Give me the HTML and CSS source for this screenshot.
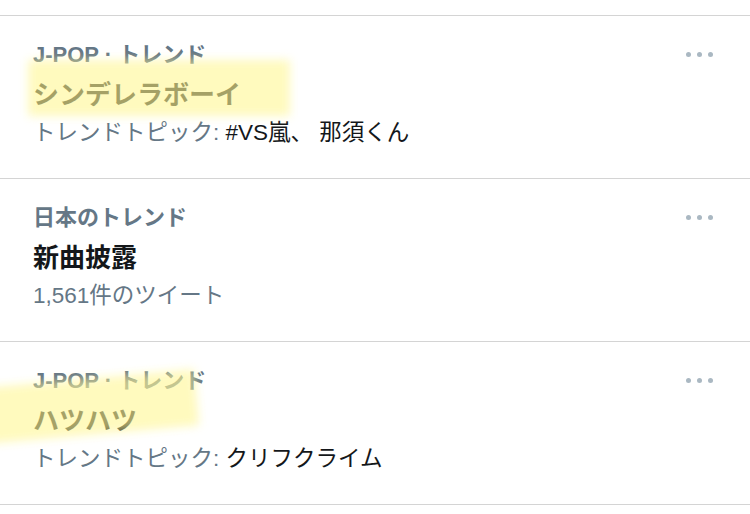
FILE: index.html
```html
<!DOCTYPE html>
<html lang="ja">
  <head>
    <meta charset="UTF-8" />
    <meta name="viewport" content="width=device-width, initial-scale=1.0" />
    <title>トレンド</title>
    <link rel="stylesheet" href="styles.css">
  </head>
  <body>
    <div class="trends">
      <div class="trend">
        <div class="trend-body">
          <div class="trend-category">J-POP · トレンド</div>
          <div class="trend-title">シンデレラボーイ</div>
          <div class="trend-meta">トレンドトピック: <span class="trend-topic">#VS嵐、 那須くん</span></div>
        </div>
        <div class="trend-more">
          <svg width="27" height="5" viewBox="0 0 27 5"><circle cx="2.5" cy="2.5" r="2.5"/><circle cx="13.5" cy="2.5" r="2.5"/><circle cx="24.5" cy="2.5" r="2.5"/></svg>
        </div>
        <!-- マーカー -->
        <div class="marker marker-one"></div>
      </div>
      <div class="trend">
        <div class="trend-body">
          <div class="trend-category">日本のトレンド</div>
          <div class="trend-title">新曲披露</div>
          <div class="trend-meta">1,561件のツイート</div>
        </div>
        <div class="trend-more">
          <svg width="27" height="5" viewBox="0 0 27 5"><circle cx="2.5" cy="2.5" r="2.5"/><circle cx="13.5" cy="2.5" r="2.5"/><circle cx="24.5" cy="2.5" r="2.5"/></svg>
        </div>
      </div>
      <div class="trend">
        <div class="trend-body">
          <div class="trend-category">J-POP · トレンド</div>
          <div class="trend-title">ハツハツ</div>
          <div class="trend-meta">トレンドトピック: <span class="trend-topic">クリフクライム</span></div>
        </div>
        <div class="trend-more">
          <svg width="27" height="5" viewBox="0 0 27 5"><circle cx="2.5" cy="2.5" r="2.5"/><circle cx="13.5" cy="2.5" r="2.5"/><circle cx="24.5" cy="2.5" r="2.5"/></svg>
        </div>
        <div class="marker marker-two"></div>
      </div>
    </div>
  </body>
</html>
```

FILE: styles.css
```css
body {
  font-family: "Liberation Sans", "Noto Sans CJK JP", sans-serif;
  margin: 0;
  background: #fff;
  overflow: hidden;
}
.trends {
  margin-top: 15px;
  border-top: 1px solid #d4d4d4;
}
.trend {
  position: relative;
  display: flex;
  justify-content: space-between;
  height: 163px;
  box-sizing: border-box;
  padding: 19px 37px 0 33px;
  border-bottom: 1px solid #d4d4d4;
}
.trend-category {
  font-size: 22px;
  font-weight: bold;
  line-height: 40px;
  color: #657786;
}
.trend-title {
  font-size: 26px;
  font-weight: bold;
  line-height: 40px;
  color: #14171a;
}
.trend-meta {
  font-size: 22.5px;
  line-height: 36px;
  color: #657786;
}
.trend-topic {
  color: #14171a;
}
.trend-more {
  padding-top: 17px;
}
.trend-more svg {
  display: block;
  fill: #aab8c2;
}
.marker {
  position: absolute;
  background: rgba(255, 247, 150, 0.62);
  filter: blur(5px);
}
.marker-one {
  left: 28px;
  top: 44px;
  width: 262px;
  height: 56px;
}
.marker-two {
  left: -25px;
  top: 37px;
  width: 222px;
  height: 56px;
  transform: rotate(-5deg);
}
```
